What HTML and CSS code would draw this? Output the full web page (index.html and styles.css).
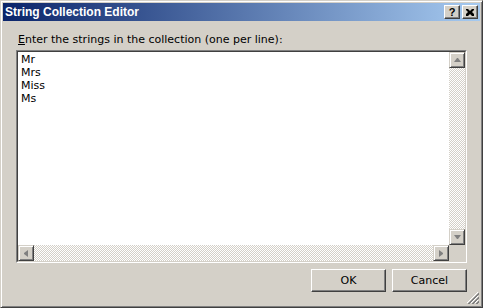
FILE: index.html
```html
<!DOCTYPE html>
<html lang="en">

<head>
    <meta charset="UTF-8">
    <meta name="viewport" content="width=device-width, initial-scale=1.0">
    <title>String Collection Editor</title>
    <link rel="stylesheet" href="styles.css">
</head>

<body>
    <div class="window">
        <!-- 标题栏 -->
        <div class="titlebar">
            <span class="title">String Collection Editor</span>
            <div class="caption_btns">
                <span class="cap_btn help">?</span>
                <span class="cap_btn close">
                    <svg width="8" height="7" viewBox="0 0 8 7">
                        <path d="M0 0h2l2 2 2-2h2v1l-2 2 2 2v2h-2l-2-2-2 2h-2v-2l2-2-2-2z" fill="#000" />
                    </svg>
                </span>
            </div>
        </div>

        <!-- 内容 -->
        <div class="content">
            <div class="label"><u>E</u>nter the strings in the collection (one per line):</div>
            <div class="field">
                <div class="field_inner">
                    <div class="text_area">Mr<br>Mrs<br>Miss<br>Ms</div>
                    <div class="vscroll">
                        <span class="sbtn">
                            <svg width="7" height="4" viewBox="0 0 7 4"><path d="M3 0h1l3 4h-7z" fill="#808080" /></svg>
                        </span>
                        <span class="track"></span>
                        <span class="sbtn">
                            <svg width="7" height="4" viewBox="0 0 7 4"><path d="M0 0h7l-3 4h-1z" fill="#808080" /></svg>
                        </span>
                    </div>
                    <div class="hscroll">
                        <span class="sbtn">
                            <svg width="4" height="7" viewBox="0 0 4 7"><path d="M4 0v7l-4-3v-1z" fill="#808080" /></svg>
                        </span>
                        <span class="track"></span>
                        <span class="sbtn">
                            <svg width="4" height="7" viewBox="0 0 4 7"><path d="M0 0v7l4-3v-1z" fill="#808080" /></svg>
                        </span>
                    </div>
                    <div class="corner"></div>
                </div>
            </div>

            <div class="footer">
                <button class="btn">OK</button>
                <button class="btn">Cancel</button>
            </div>
        </div>

        <!-- 右下角拖动 -->
        <svg class="grip" width="12" height="12" viewBox="0 0 12 12">
            <path d="M11 0L0 11M11 4L4 11M11 8L8 11" stroke="#fff" stroke-width="1" />
            <path d="M12 1L1 12M12 2L2 12M12 5L5 12M12 6L6 12M12 9L9 12M12 10L10 12" stroke="#808080" stroke-width="1" />
        </svg>
    </div>
</body>

</html>
```

FILE: styles.css
```css
* {
    box-sizing: border-box;
}

body {
    margin: 0;
    font-family: "DejaVu Sans", Verdana, sans-serif;
    font-size: 11px;
    color: #000;
}

.window {
    width: 483px;
    height: 308px;
    position: relative;
    background-color: #d4d0c8;
    border: 1px solid;
    border-color: #d4d0c8 #404040 #404040 #d4d0c8;
    box-shadow: inset 1px 1px #fff, inset -1px -1px #808080;
    padding: 2px;
    display: flex;
    flex-direction: column;
}

.titlebar {
    height: 18px;
    display: flex;
    align-items: center;
    justify-content: space-between;
    padding: 0 2px 0 2px;
    background: linear-gradient(to right, #0a246a, #a6caf0);
}

.title {
    color: #fff;
    font-family: "Liberation Sans", Arial, sans-serif;
    font-weight: bold;
    font-size: 12px;
}

.caption_btns {
    display: flex;
    gap: 2px;
}

.cap_btn {
    width: 16px;
    height: 14px;
    display: flex;
    align-items: center;
    justify-content: center;
    background-color: #d4d0c8;
    border: 1px solid;
    border-color: #fff #404040 #404040 #fff;
    box-shadow: inset -1px -1px #808080;
    font-family: "Liberation Sans", Arial, sans-serif;
    font-weight: bold;
    font-size: 11px;
    line-height: 1;
    padding-top: 1px;
}

.content {
    flex: 1;
    display: flex;
    flex-direction: column;
    padding: 12px 13px 0 13px;
}

.label {
    line-height: 13px;
    padding-left: 2px;
    margin-bottom: 4px;
}

.field {
    height: 213px;
    border: 1px solid;
    border-color: #808080 #fff #fff #808080;
}

.field_inner {
    height: 100%;
    border: 1px solid;
    border-color: #404040 #d4d0c8 #d4d0c8 #404040;
    display: grid;
    grid-template-columns: 1fr 16px;
    grid-template-rows: 1fr 16px;
    background-color: #fff;
}

.text_area {
    padding: 1px 3px;
    line-height: 13px;
}

.vscroll,
.hscroll {
    display: flex;
}

.vscroll {
    flex-direction: column;
}

.track {
    flex: 1;
    background: repeating-conic-gradient(#fff 0 25%, #d4d0c8 0 50%) 0 0 / 2px 2px;
}

.sbtn {
    width: 16px;
    height: 16px;
    display: flex;
    align-items: center;
    justify-content: center;
    background-color: #d4d0c8;
    border: 1px solid;
    border-color: #d4d0c8 #404040 #404040 #d4d0c8;
    box-shadow: inset 1px 1px #fff, inset -1px -1px #808080;
}

.corner {
    background-color: #d4d0c8;
}

.footer {
    display: flex;
    justify-content: flex-end;
    gap: 6px;
    margin-top: 6px;
}

.btn {
    width: 75px;
    height: 23px;
    font-family: "DejaVu Sans", Verdana, sans-serif;
    font-size: 11px;
    color: #000;
    background-color: #d4d0c8;
    border: 1px solid;
    border-color: #fff #404040 #404040 #fff;
    box-shadow: inset -1px -1px #808080;
    padding: 0;
}

.grip {
    position: absolute;
    right: 3px;
    bottom: 3px;
}
```
